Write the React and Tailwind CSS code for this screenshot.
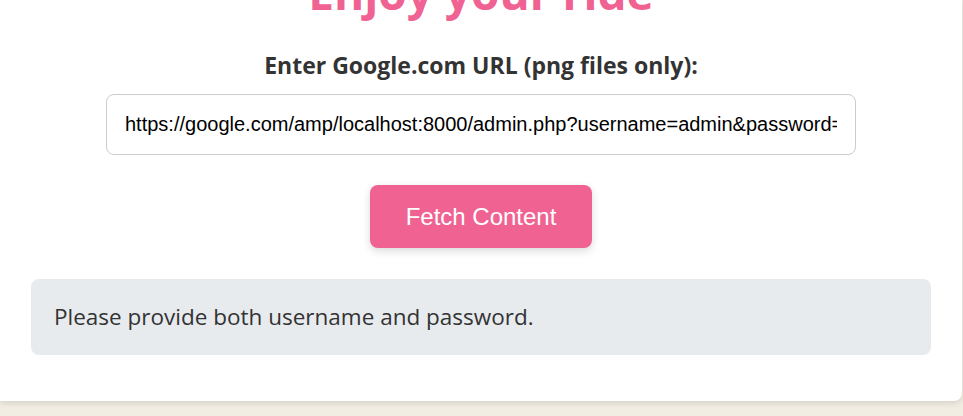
export default function App() {
  return (
    <div className="min-h-[416px] bg-[#f1ede3] overflow-hidden" style={{ fontFamily: '"Open Sans", "Noto Sans", sans-serif' }}>
      <div className="bg-white w-[962px] rounded-br-lg shadow-[0_2px_6px_rgba(0,0,0,0.12)] flex flex-col items-center pb-[46px]">
        <h1 className="mt-[-37px] text-[46px] leading-[58px] font-bold text-[#f06292]">Enjoy your ride</h1>
        <label className="mt-[28px] text-[23px] leading-[32px] font-bold text-[#333]">Enter Google.com URL (png files only):</label>
        <input
          readOnly
          value="https://google.com/amp/localhost:8000/admin.php?username=admin&password="
          className="mt-[13px] w-[750px] h-[61px] border border-[#ccc] rounded-lg px-[18px] text-[20px] text-black bg-white outline-none"
          style={{ fontFamily: '"Liberation Sans", Arial, sans-serif' }}
        />
        <button className="mt-[30px] w-[222px] h-[63px] rounded-lg bg-[#f06292] text-white text-[24px] shadow-[0_3px_8px_rgba(0,0,0,0.15)]" style={{ fontFamily: '"Liberation Sans", Arial, sans-serif' }}>
          Fetch Content
        </button>
        <div className="mt-[31px] w-[900px] h-[76px] rounded-lg bg-[#e8ebee] flex items-center px-[23px] text-[22.5px] text-[#333]">
          Please provide both username and password.
        </div>
      </div>
    </div>
  );
}
